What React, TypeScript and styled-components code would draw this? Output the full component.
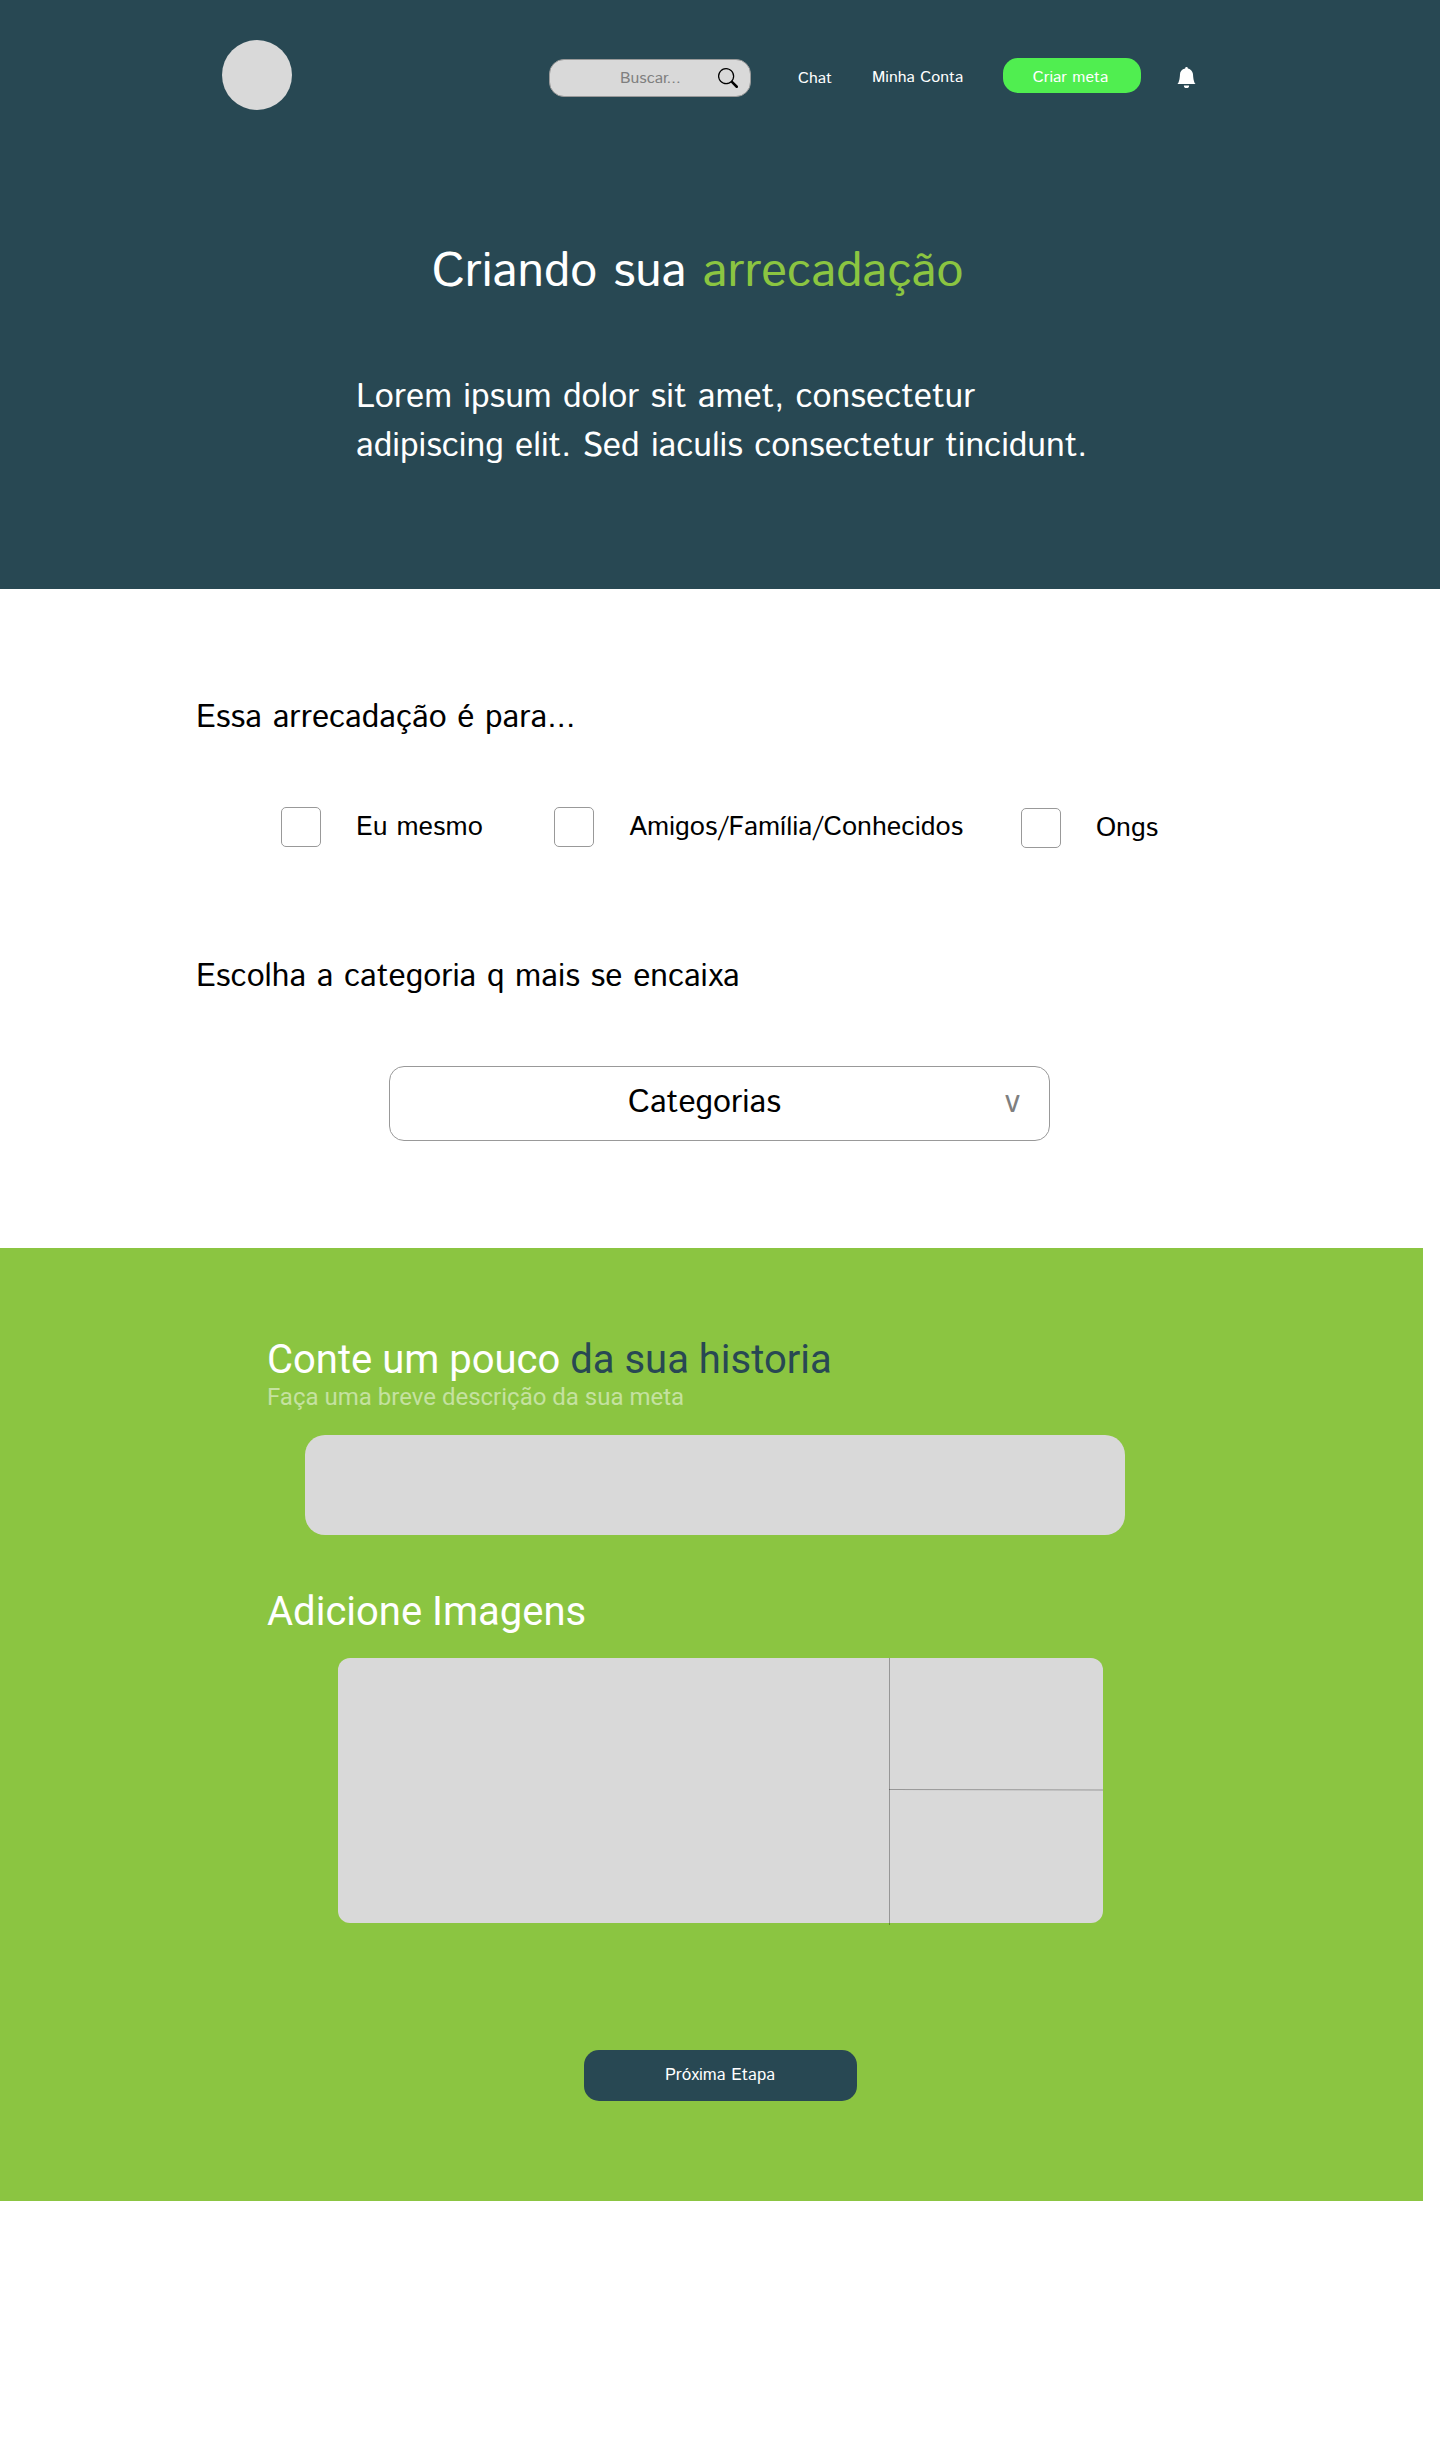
import React from 'react';
import styled, { createGlobalStyle } from 'styled-components';
import { BsBellFill, BsSearch } from 'react-icons/bs';

const colors = {
  petrol: '#284853',
  lime: '#8bc541',
  neon: '#50ee50',
  gray: '#d9d9d9',
  line: '#999999',
  muted: '#7f7f7f',
};

const GlobalStyle = createGlobalStyle`
  *, *::before, *::after { box-sizing: border-box; }
  body {
    margin: 0;
    background: #fff;
    font-family: "Istok Web", "Open Sans", "Noto Sans", sans-serif;
    color: #000;
  }
  h1, h2, p { margin: 0; font-weight: 400; }
  button, input { font: inherit; color: inherit; border: 0; padding: 0; background: none; }
`;

const Page = styled.div`
  width: 1440px;
  min-height: 2441px;
`;

const Hero = styled.header`
  height: 589px;
  padding-top: 40px;
  background: ${colors.petrol};
  color: #fff;
`;

const Nav = styled.nav`
  display: flex;
  align-items: flex-start;
  height: 70px;
  padding-left: 222px;
  font-size: 16px;
  line-height: 24px;
`;

const Logo = styled.div`
  flex: none;
  width: 70px;
  height: 70px;
  border-radius: 50%;
  background: ${colors.gray};
`;

const SearchBox = styled.label`
  display: flex;
  align-items: center;
  width: 202px;
  height: 38px;
  margin: 19px 0 0 257px;
  padding: 0 12px 0 70px;
  border: 1px solid ${colors.line};
  border-radius: 15px;
  background: ${colors.gray};
  color: #000;
`;

const SearchInput = styled.input`
  width: 98px;
  height: 34px;
  padding-top: 1px;
  outline: 0;
  &::placeholder { color: ${colors.muted}; opacity: 1; }
`;

const NavLink = styled.a<{ $width: number; $gap: number; $top: number }>`
  flex: none;
  width: ${p => p.$width}px;
  margin: ${p => p.$top}px 0 0 ${p => p.$gap}px;
  white-space: nowrap;
`;

const CreateButton = styled.button`
  flex: none;
  width: 138px;
  height: 35px;
  margin: 18px 0 0 39px;
  padding: 5px 3px 0 0;
  border-radius: 15px;
  background: ${colors.neon};
  color: #fff;
  line-height: 24px;
`;

const Bell = styled(BsBellFill)`
  flex: none;
  margin: 27px 0 0 35px;
`;

const Title = styled.h1`
  margin-top: 133px;
  padding-left: 432px;
  font-size: 48px;
  line-height: 60px;
`;

const Accent = styled.span<{ $color: string }>`
  color: ${p => p.$color};
`;

const Lead = styled.p`
  width: 1140px;
  margin-top: 70px;
  padding-left: 356px;
  font-size: 34px;
  line-height: 49px;
`;

const Choices = styled.section`
  height: 659px;
  padding-top: 106px;
`;

const Question = styled.h2`
  padding-left: 196px;
  font-size: 32px;
  line-height: 46px;
`;

const Options = styled.div`
  display: flex;
  align-items: flex-start;
  height: 41px;
  margin: 66px 0 106px;
  padding-left: 281px;
`;

const Option = styled.label<{ $width: number; $drop?: number }>`
  display: flex;
  align-items: flex-start;
  gap: 35px;
  flex: none;
  width: ${p => p.$width}px;
  padding-top: ${p => p.$drop ?? 0}px;
  font-size: 27px;
  line-height: 39px;
  white-space: nowrap;
`;

const Check = styled.input.attrs({ type: 'checkbox' })`
  appearance: none;
  flex: none;
  width: 40px;
  height: 40px;
  margin: 0;
  border: 1px solid ${colors.line};
  border-radius: 5px;
  background: #fff;
`;

const OptionText = styled.span`
  margin-top: 1px;
`;

const Select = styled.button`
  display: flex;
  align-items: flex-start;
  justify-content: space-between;
  width: 661px;
  height: 75px;
  margin: 66px 0 0 389px;
  padding: 13px 29px 0 238px;
  border: 1px solid ${colors.line};
  border-radius: 15px;
  background: #fff;
  font-size: 32px;
  line-height: 46px;
`;

const Story = styled.section`
  width: 1423px;
  height: 953px;
  padding: 88px 0 100px 267px;
  background: ${colors.lime};
  color: #fff;
  font-family: Roboto, sans-serif;
`;

const StoryTitle = styled.h2`
  font-size: 40px;
  line-height: 47px;
`;

const Hint = styled.p`
  font-size: 24px;
  line-height: 28px;
  color: rgba(255, 255, 255, 0.5);
`;

const Description = styled.textarea`
  display: block;
  width: 820px;
  height: 100px;
  margin: 24px 0 53px 38px;
  padding: 16px 20px;
  border: 0;
  border-radius: 20px;
  outline: 0;
  resize: none;
  background: ${colors.gray};
`;

const Gallery = styled.div`
  display: grid;
  grid-template-columns: 551px 214px;
  grid-template-rows: 131px 134px;
  width: 765px;
  margin: 23px 0 127px 71px;
  border-radius: 12px;
  background: ${colors.gray};
`;

const MainSlot = styled.div`
  grid-row: 1 / 3;
`;

const SideSlots = styled.div`
  grid-row: 1 / 3;
  grid-column: 2;
  height: 267px;
  border-left: 1px solid rgba(0, 0, 0, 0.3);
`;

const SideSlot = styled.div`
  height: 131px;
`;

const Divider = styled.div`
  width: 214px;
  height: 1px;
  margin-left: -1px;
  background: rgba(0, 0, 0, 0.3);
  transform: rotate(0.13deg);
  transform-origin: left center;
`;

const NextButton = styled.button`
  display: block;
  width: 273px;
  height: 51px;
  margin-left: 317px;
  padding: 0 1px 1px 0;
  border-radius: 15px;
  background: ${colors.petrol};
  color: #fff;
  font: 17px/24px "Istok Web", "Open Sans", "Noto Sans", sans-serif;
`;

export default function App() {
  return (
    <Page>
      <GlobalStyle />
      <Hero>
        <Nav>
          <Logo />
          <SearchBox>
            <SearchInput placeholder="Buscar..." />
            <BsSearch size={20} />
          </SearchBox>
          <NavLink $width={36} $gap={47} $top={27}>Chat</NavLink>
          <NavLink $width={92} $gap={38} $top={26}>Minha Conta</NavLink>
          <CreateButton>Criar meta</CreateButton>
          <Bell size={21} />
        </Nav>
        <Title>
          Criando sua <Accent $color={colors.lime}>arrecadação</Accent>
        </Title>
        <Lead>
          Lorem ipsum dolor sit amet, consectetur
          <br />
          adipiscing elit. Sed iaculis consectetur tincidunt.
        </Lead>
      </Hero>

      <Choices>
        <Question>Essa arrecadação é para...</Question>
        <Options>
          <Option $width={273}>
            <Check />
            <OptionText>Eu mesmo</OptionText>
          </Option>
          <Option $width={467}>
            <Check />
            <OptionText>Amigos/Família/Conhecidos</OptionText>
          </Option>
          <Option $width={140} $drop={1}>
            <Check />
            <OptionText>Ongs</OptionText>
          </Option>
        </Options>
        <Question>Escolha a categoria q mais se encaixa</Question>
        <Select>
          <span>Categorias</span>
          <Accent $color={colors.muted}>v</Accent>
        </Select>
      </Choices>

      <Story>
        <StoryTitle>
          Conte um pouco <Accent $color={colors.petrol}>da sua historia</Accent>
        </StoryTitle>
        <Hint>Faça uma breve descrição da sua meta</Hint>
        <Description />
        <StoryTitle>Adicione Imagens</StoryTitle>
        <Gallery>
          <MainSlot />
          <SideSlots>
            <SideSlot />
            <Divider />
          </SideSlots>
        </Gallery>
        <NextButton>Próxima Etapa</NextButton>
      </Story>
    </Page>
  );
}
